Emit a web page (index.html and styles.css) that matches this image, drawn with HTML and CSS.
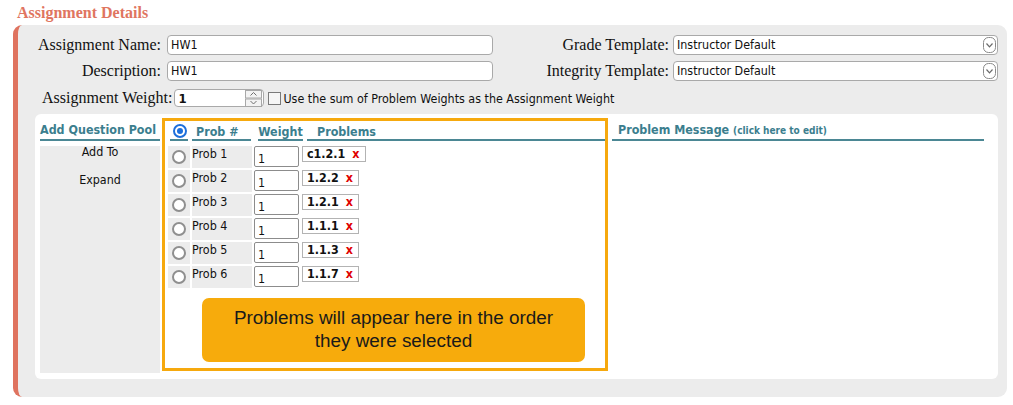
FILE: index.html
```html
<!DOCTYPE html>
<html>
<head>
<meta charset="utf-8">
<link rel="stylesheet" href="styles.css">
</head>
<body>
<div class="page">
  <div class="title">Assignment Details</div>
  <div class="panel">
    <div class="top">
      <div class="fields">
        <label class="lbl">Assignment Name:</label>
        <div class="input">HW1</div>
        <label class="lbl">Description:</label>
        <div class="input">HW1</div>
      </div>
      <div class="fields right">
        <label class="lbl">Grade Template:</label>
        <div class="select">Instructor Default
          <svg class="chev" width="13" height="16" viewBox="0 0 13 16"><rect x="0.5" y="0.5" width="12" height="15" rx="5" fill="#fff" stroke="#8a8a8a"/><path d="M3.5 6.5 L6.5 9.8 L9.5 6.5" fill="none" stroke="#6a6a6a" stroke-width="1.2"/></svg>
        </div>
        <label class="lbl">Integrity Template:</label>
        <div class="select">Instructor Default
          <svg class="chev" width="13" height="16" viewBox="0 0 13 16"><rect x="0.5" y="0.5" width="12" height="15" rx="5" fill="#fff" stroke="#8a8a8a"/><path d="M3.5 6.5 L6.5 9.8 L9.5 6.5" fill="none" stroke="#6a6a6a" stroke-width="1.2"/></svg>
        </div>
      </div>
    </div>
    <div class="weightrow">
      <span class="lbl">Assignment Weight:</span>
      <div class="num">
        <span class="numval">1</span>
        <svg class="spin" width="17" height="17" viewBox="0 0 17 17"><rect x="0.5" y="0.5" width="16" height="7.5" fill="#f3f3f3" stroke="#a8a8a8"/><rect x="0.5" y="9" width="16" height="7.5" fill="#f3f3f3" stroke="#a8a8a8"/><path d="M5.5 5.5 L8.5 2.5 L11.5 5.5" fill="none" stroke="#707070"/><path d="M5.5 11 L8.5 14 L11.5 11" fill="none" stroke="#707070"/></svg>
      </div>
      <span class="check"></span>
      <span class="checktext">Use the sum of Problem Weights as the Assignment Weight</span>
    </div>
    <div class="inner">
      <div class="pool">
        <div class="hdr">Add Question Pool</div>
        <div class="poolbody">
          <div class="pitem">Add To</div>
          <div class="pitem">Expand</div>
        </div>
      </div>
      <div class="box">
        <div class="thead">
          <div class="th th-radio"><span class="radio on"></span></div>
          <div class="th th-num">Prob #</div>
          <div class="th th-weight">Weight</div>
          <div class="th th-probs">Problems</div>
        </div>
        <div class="rows">
          <div class="cell rc"><span class="radio"></span></div><div class="cell pc">Prob 1</div><div class="wc"><div class="winput">1</div></div><div class="tc"><span class="tag">c1.2.1<span class="x">x</span></span></div>
          <div class="cell rc"><span class="radio"></span></div><div class="cell pc">Prob 2</div><div class="wc"><div class="winput">1</div></div><div class="tc"><span class="tag">1.2.2<span class="x">x</span></span></div>
          <div class="cell rc"><span class="radio"></span></div><div class="cell pc">Prob 3</div><div class="wc"><div class="winput">1</div></div><div class="tc"><span class="tag">1.2.1<span class="x">x</span></span></div>
          <div class="cell rc"><span class="radio"></span></div><div class="cell pc">Prob 4</div><div class="wc"><div class="winput">1</div></div><div class="tc"><span class="tag">1.1.1<span class="x">x</span></span></div>
          <div class="cell rc"><span class="radio"></span></div><div class="cell pc">Prob 5</div><div class="wc"><div class="winput">1</div></div><div class="tc"><span class="tag">1.1.3<span class="x">x</span></span></div>
          <div class="cell rc"><span class="radio"></span></div><div class="cell pc">Prob 6</div><div class="wc"><div class="winput">1</div></div><div class="tc"><span class="tag">1.1.7<span class="x">x</span></span></div>
        </div>
        <div class="note">Problems will appear here in the order<br>they were selected</div>
      </div>
      <div class="msg">
        <div class="hdr">Problem Message <span class="small">(click here to edit)</span></div>
      </div>
    </div>
  </div>
</div>
</body>
</html>
```

FILE: styles.css
```css
* { box-sizing: border-box; }
body {
  margin: 0;
  background: #fff;
  font-family: "DejaVu Sans Condensed", "DejaVu Sans", sans-serif;
  font-size: 12.4px;
  color: #111;
}
.page { padding: 3px 6px 0 13px; }
.title {
  font-family: "Liberation Serif", serif;
  font-weight: bold;
  font-size: 16px;
  color: #e07560;
  margin-left: 4px;
  height: 22px;
  line-height: 20px;
}
.panel {
  width: 994px;
  height: 372px;
  background: #ececec;
  border-left: 5px solid #df735f;
  border-radius: 9px;
  padding: 10px 9px 18px 0;
  display: flex;
  flex-direction: column;
}
.top { display: flex; justify-content: space-between; }
.fields {
  display: grid;
  grid-template-columns: 143px 326px;
  column-gap: 6px;
  row-gap: 6px;
  align-items: center;
}
.fields.right { grid-template-columns: auto 325px; column-gap: 4px; }
.lbl {
  font-family: "Liberation Serif", serif;
  font-size: 16px;
  text-align: right;
  color: #111;
  white-space: nowrap;
}
.input, .select {
  height: 20px;
  border: 1px solid #a9a9a9;
  border-radius: 4px;
  background: #fff;
  padding: 0 3px;
  line-height: 18px;
  font-size: 12.4px;
  color: #111;
}
.select { position: relative; }
.chev { position: absolute; right: 1px; top: 1px; }
.weightrow {
  margin-top: 8px;
  height: 18px;
  display: flex;
  align-items: center;
  padding-left: 24px;
}
.weightrow .lbl { margin-right: 2px; }
.num {
  width: 90px;
  height: 18px;
  border: 1px solid #a9a9a9;
  border-radius: 4px;
  background: #fff;
  display: flex;
  align-items: center;
  justify-content: space-between;
  padding: 0 1px 0 3px;
}
.numval { font-weight: bold; font-size: 13px; }
.check {
  width: 13px;
  height: 13px;
  border: 1px solid #7a7a7a;
  background: #f6f6f6;
  margin-left: 4px;
}
.checktext { margin-left: 2px; color: #111; }
.inner {
  flex: 1;
  margin: 7px 0 0 17px;
  background: #fff;
  border-radius: 6px;
  display: flex;
  padding: 4px 14px 6px 5px;
}
.hdr {
  height: 23px;
  border-bottom: 2px solid #4b8794;
  padding-top: 5px;
  line-height: 14px;
  font-weight: bold;
  color: #3b7e8e;
  white-space: nowrap;
}
.small { font-size: 10px; }
.pool { width: 120px; display: flex; flex-direction: column; }
.poolbody {
  flex: 1;
  margin-top: 5px;
  background: #ececec;
  text-align: center;
  line-height: 12px;
  color: #111;
}
.pitem + .pitem { margin-top: 16px; }
.box {
  align-self: flex-start;
  width: 446px;
  margin-left: 2px;
  border: 3px solid #f6a90e;
  padding: 3px 0 6px 3px;
}
.thead {
  display: flex;
  margin-left: 2px;
  margin-bottom: 5px;
  gap: 4px;
}
.th {
  height: 17px;
  border-bottom: 2px solid #4b8794;
  font-weight: bold;
  color: #3b7e8e;
  line-height: 14px;
  padding-top: 1px;
  white-space: nowrap;
}
.th-radio { width: 18px; padding: 0 0 0 3px; }
.th-num { width: 59px; padding-left: 4px; }
.th-weight { width: 45px; margin-left: 3px; text-align: center; }
.th-probs { flex: 1; padding-left: 10px; }
.radio {
  display: block;
  width: 14px;
  height: 14px;
  border: 2px solid #8f8f8f;
  border-radius: 50%;
  background: #fff;
  position: relative;
}
.radio.on { border-color: #1d6fdb; }
.radio.on::after {
  content: "";
  position: absolute;
  left: 2px;
  top: 2px;
  width: 6px;
  height: 6px;
  border-radius: 50%;
  background: #1d6fdb;
}
.rows {
  display: grid;
  grid-template-columns: 22px 60px 46px 1fr;
  grid-auto-rows: 22px;
  column-gap: 2px;
  row-gap: 2px;
  margin-right: 2px;
}
.cell { background: #ececec; }
.rc { display: flex; align-items: center; justify-content: center; }
.pc { line-height: 14px; padding-top: 1px; color: #111; }
.winput {
  width: 45px;
  height: 21px;
  border: 1px solid #8c8c8c;
  border-radius: 2px;
  background: #fff;
  padding: 5px 0 0 3px;
  line-height: 14px;
}
.tag {
  display: inline-flex;
  align-items: center;
  height: 16px;
  margin-top: -1px;
  border: 1px solid #b3b3b3;
  padding: 0 5px 0 4px;
  font-weight: bold;
  color: #111;
  line-height: 14px;
}
.x { color: #e00000; margin-left: 7px; }
.note {
  margin: 10px 0 0 34px;
  width: 383px;
  height: 64px;
  background: #f7ab0c;
  border-radius: 7px;
  font-family: "Liberation Sans", Arial, sans-serif;
  font-size: 18.9px;
  line-height: 23px;
  color: #1a1a1a;
  text-align: center;
  padding-top: 8px;
}
.msg { flex: 1; margin-left: 4px; }
.msg .hdr { padding-left: 6px; }
```
